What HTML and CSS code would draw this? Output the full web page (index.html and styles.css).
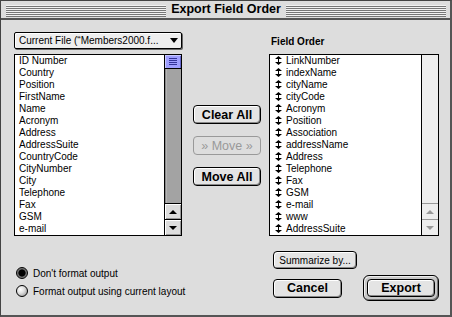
FILE: index.html
```html
<!DOCTYPE html>
<html lang="en">
<head>
<meta charset="UTF-8">
<title>Export Field Order</title>
<link rel="stylesheet" href="styles.css">
</head>
<body>

<div class="window">

  <div class="titlebar">
    <div class="stripes"></div>
    <div class="title">Export Field Order</div>
    <div class="stripes"></div>
  </div>

  <div class="content">
    <div class="top">

      <div class="col-left">
        <div class="popup">
          <span>Current File (“Members2000.f...</span>
          <span class="popup-arrow"></span>
        </div>
        <div class="list">
          <ul class="items">
            <li>ID Number</li>
            <li>Country</li>
            <li>Position</li>
            <li>FirstName</li>
            <li>Name</li>
            <li>Acronym</li>
            <li>Address</li>
            <li>AddressSuite</li>
            <li>CountryCode</li>
            <li>CityNumber</li>
            <li>City</li>
            <li>Telephone</li>
            <li>Fax</li>
            <li>GSM</li>
            <li>e-mail</li>
          </ul>
          <div class="scroll">
            <div class="thumb"><span></span><span></span><span></span><span></span></div>
            <div class="track"></div>
            <div class="arrow up"></div>
            <div class="arrow down"></div>
          </div>
        </div>
      </div>

      <div class="col-mid">
        <button class="btn">Clear All</button>
        <button class="btn disabled">» Move »</button>
        <button class="btn">Move All</button>
      </div>

      <div class="col-right">
        <div class="label">Field Order</div>
        <div class="list">
          <ul class="items order">
            <li>LinkNumber</li>
            <li>indexName</li>
            <li>cityName</li>
            <li>cityCode</li>
            <li>Acronym</li>
            <li>Position</li>
            <li>Association</li>
            <li>addressName</li>
            <li>Address</li>
            <li>Telephone</li>
            <li>Fax</li>
            <li>GSM</li>
            <li>e-mail</li>
            <li>www</li>
            <li>AddressSuite</li>
          </ul>
          <div class="scroll off">
            <div class="track"></div>
            <div class="arrow up"></div>
            <div class="arrow down"></div>
          </div>
        </div>
      </div>

    </div>

    <div class="bottom">
      <div class="radios">
        <label class="radio"><span class="dot checked"></span>Don't format output</label>
        <label class="radio"><span class="dot"></span>Format output using current layout</label>
      </div>
      <div class="actions">
        <button class="btn small">Summarize by...</button>
        <div class="action-row">
          <button class="btn cancel">Cancel</button>
          <div class="default-ring">
            <button class="btn export">Export</button>
          </div>
        </div>
      </div>
    </div>
  </div>

</div>

</body>
</html>
```

FILE: styles.css
```css
body {
  margin: 0;
  padding: 0;
  background: #dddddd;
  font-family: "Liberation Sans", Arial, sans-serif;
  font-size: 10px;
  color: #000;
}

.window {
  width: 452px;
  height: 317px;
  box-sizing: border-box;
  border: 1px solid #444;
  border-right: 2px solid #555;
  border-bottom: 2px solid #555;
  background: #dddddd;
}

/* title bar */

.titlebar {
  display: flex;
  align-items: center;
  height: 19px;
  padding: 0 4px 0 5px;
  border-bottom: 2px solid #555;
  box-sizing: border-box;
  background: #dddddd;
}

.stripes {
  flex: 1;
  height: 12px;
  margin-top: 2px;
  background: repeating-linear-gradient(to bottom, #f2f2f2 0, #f2f2f2 1px, #777 1px, #777 2px);
}

.title {
  padding: 0 5px;
  font-weight: bold;
  font-size: 12.5px;
  line-height: 19px;
}

/* content */

.content {
  padding: 12px 11px 0 13px;
}

.top {
  display: flex;
}

.col-left {
  width: 168px;
}

.col-mid {
  width: 87px;
  display: flex;
  flex-direction: column;
  align-items: center;
  padding-top: 73px;
  padding-left: 3px;
  box-sizing: border-box;
}

.col-right {
  width: 170px;
}

.popup {
  display: flex;
  justify-content: space-between;
  align-items: center;
  height: 17px;
  box-sizing: border-box;
  margin-bottom: 5px;
  padding: 0 3px 0 4px;
  border: 1px solid #000;
  border-radius: 2px;
  background: #eeeeee;
  box-shadow: 1px 1px 0 #666, inset 1px 1px 0 #fff;
  white-space: nowrap;
}

.popup-arrow {
  width: 0;
  height: 0;
  border-left: 4px solid transparent;
  border-right: 4px solid transparent;
  border-top: 5px solid #000;
}

.label {
  height: 22px;
  padding: 4px 0 0 2px;
  box-sizing: border-box;
  font-weight: bold;
  font-size: 10px;
}

/* lists */

.list {
  display: flex;
  height: 182px;
  border: 1px solid #000;
  box-sizing: border-box;
  background: #fff;
}

.items {
  flex: 1;
  list-style: none;
  margin: 0;
  padding: 0 0 0 4px;
  overflow: hidden;
}

.items li {
  height: 12px;
  line-height: 12px;
  white-space: nowrap;
}

.order {
  padding-left: 16px;
}

.order li {
  position: relative;
}

/* the little up/down drag handle */
.order li::before {
  content: "";
  position: absolute;
  left: -11px;
  top: 1px;
  width: 7px;
  height: 9px;
  background: #000;
  clip-path: polygon(50% 0, 100% 33%, 57% 33%, 57% 67%, 100% 67%, 50% 100%, 0 67%, 43% 67%, 43% 33%, 0 33%);
}

/* scroll bars */

.scroll {
  width: 16px;
  display: flex;
  flex-direction: column;
  border-left: 1px solid #000;
  background: #a3a3a3;
}

.thumb {
  height: 14px;
  box-sizing: border-box;
  border-bottom: 1px solid #000;
  background: #9e9eff;
  box-shadow: inset 1px 1px 0 #c8c8ff, inset -1px 0 0 #6666cc;
  display: flex;
  flex-direction: column;
  align-items: center;
  justify-content: center;
  gap: 1px;
}

.thumb span {
  display: block;
  width: 8px;
  height: 1px;
  background: #333399;
}

.track {
  flex: 1;
  box-shadow: inset 1px 0 0 #888, inset 2px 0 0 #b4b4b4;
}

.arrow {
  height: 16px;
  box-sizing: border-box;
  border-top: 1px solid #000;
  background: #dddddd;
  box-shadow: inset 1px 1px 0 #fff, inset -1px -1px 0 #999;
  display: flex;
  align-items: center;
  justify-content: center;
}

.arrow::after {
  content: "";
  width: 0;
  height: 0;
  border-left: 4px solid transparent;
  border-right: 4px solid transparent;
}

.arrow.up::after {
  border-bottom: 4px solid #000;
}

.arrow.down::after {
  border-top: 4px solid #000;
}

.scroll.off {
  background: #eeeeee;
}

.scroll.off .track {
  box-shadow: none;
}

.scroll.off .arrow {
  background: #eeeeee;
  border-top-color: #999;
  box-shadow: none;
}

.scroll.off .arrow.up::after {
  border-bottom-color: #999;
}

.scroll.off .arrow.down::after {
  border-top-color: #999;
}

/* buttons */

.btn {
  display: block;
  height: 19px;
  width: 68px;
  padding: 0;
  margin-bottom: 12px;
  border: 1px solid #000;
  border-radius: 4px;
  background: #e4e4e4;
  box-shadow: inset 1px 1px 0 #fff, inset -1px -1px 0 #888;
  font-family: "Liberation Sans", Arial, sans-serif;
  font-weight: bold;
  font-size: 12.5px;
  color: #000;
}

.btn.disabled {
  border-color: #999;
  color: #999;
  font-weight: normal;
  box-shadow: none;
  background: #dddddd;
}

.btn.small {
  width: 84px;
  height: 18px;
  margin: 0;
  font-weight: normal;
  font-size: 10px;
}

/* bottom area */

.bottom {
  display: flex;
}

.radios {
  width: 256px;
  box-sizing: border-box;
  padding: 28px 0 0 2px;
}

.radio {
  display: flex;
  align-items: center;
  height: 18px;
  gap: 5px;
}

.dot {
  width: 12px;
  height: 12px;
  box-sizing: border-box;
  border: 1px solid #000;
  border-radius: 50%;
  background: radial-gradient(circle at 35% 35%, #fff 0, #e0e0e0 40%, #8a8a8a 100%);
}

.dot.checked {
  background: radial-gradient(circle, #000 0, #000 45%, #666 55%, #aaa 100%);
}

.actions {
  padding: 15px 0 0 3px;
}

.action-row {
  display: flex;
  align-items: center;
  gap: 21px;
  margin-top: 6px;
}

.btn.cancel {
  width: 69px;
  margin: 0;
}

.default-ring {
  padding: 3px;
  border: 1px solid #000;
  border-radius: 6px;
  background: #c8c8c8;
  box-shadow: inset 1px 1px 0 #eee, inset -1px -1px 0 #777;
}

.btn.export {
  width: 68px;
  height: 18px;
  margin: 0;
}
```
